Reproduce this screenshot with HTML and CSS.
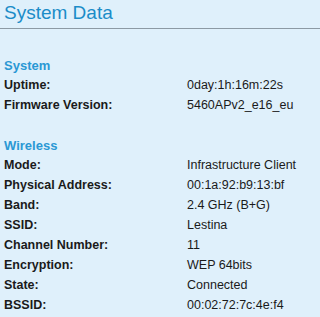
FILE: index.html
```html
<!DOCTYPE html>
<html lang="en">
<head>
    <meta charset="UTF-8">
    <title>System Data</title>
    <link rel="stylesheet" href="styles.css">
</head>
<body>

    <div class="title-bar">
        <h1>System Data</h1>
    </div>

    <table class="data">
        <tr class="section"><td colspan="2">System</td></tr>
        <tr><th>Uptime:</th><td>0day:1h:16m:22s</td></tr>
        <tr><th>Firmware Version:</th><td>5460APv2_e16_eu</td></tr>
        <tr class="spacer"><td colspan="2"></td></tr>
        <tr class="section"><td colspan="2">Wireless</td></tr>
        <tr><th>Mode:</th><td>Infrastructure Client</td></tr>
        <tr><th>Physical Address:</th><td>00:1a:92:b9:13:bf</td></tr>
        <tr><th>Band:</th><td>2.4 GHz (B+G)</td></tr>
        <tr><th>SSID:</th><td>Lestina</td></tr>
        <tr><th>Channel Number:</th><td>11</td></tr>
        <tr><th>Encryption:</th><td>WEP 64bits</td></tr>
        <tr><th>State:</th><td>Connected</td></tr>
        <tr><th>BSSID:</th><td>00:02:72:7c:4e:f4</td></tr>
    </table>

</body>
</html>
```

FILE: styles.css
```css
body {
    margin: 0;
    background-color: #dff0fb;
    font-family: "Liberation Sans", Arial, sans-serif;
    color: #1a1a1a;
}
.title-bar {
    height: 28px;
    border-bottom: 1px solid #8c9aa4;
    padding: 0 4px;
}
h1 {
    margin: 0;
    font-size: 19px;
    font-weight: normal;
    line-height: 25px;
    color: #1b8cc8;
}
.data {
    border-collapse: collapse;
    margin-top: 26px;
    width: 100%;
}
.data tr {
    height: 20px;
}
.data th,
.data td {
    padding: 0 4px;
    text-align: left;
    vertical-align: middle;
}
.data th {
    width: 175px;
    font-weight: bold;
    font-size: 12.5px;
}
.data td {
    font-size: 12.5px;
}
.section td {
    color: #2a98d4;
    font-weight: bold;
    font-size: 13px;
}
```
